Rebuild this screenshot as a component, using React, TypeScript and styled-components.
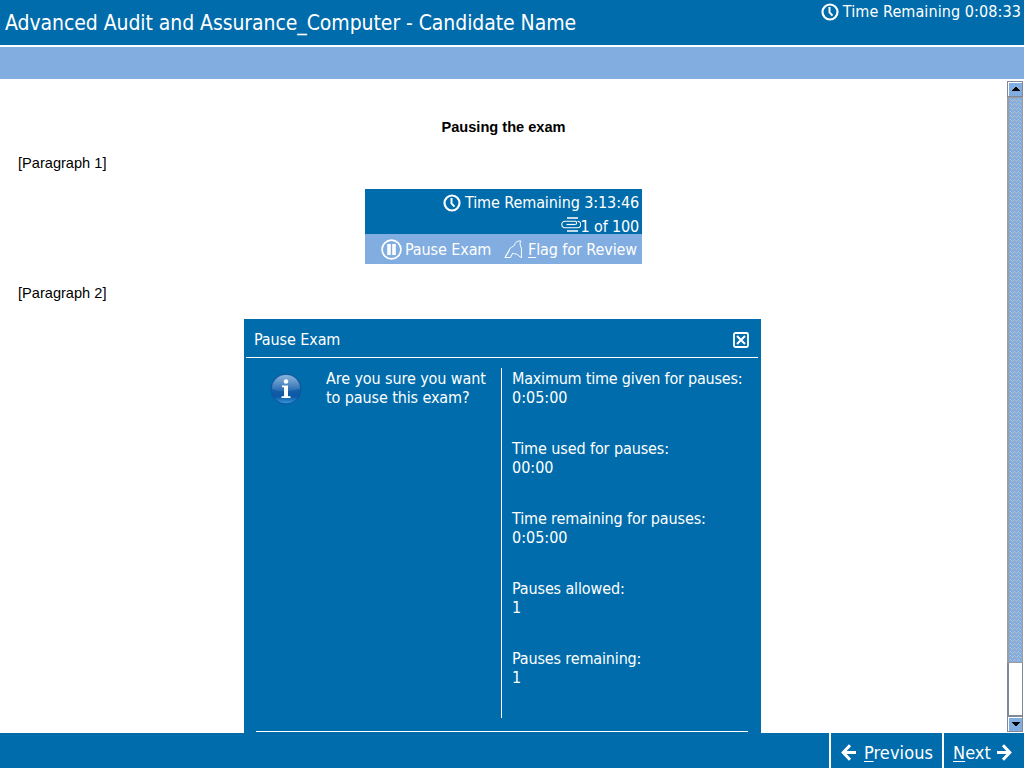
import React from "react";
import styled, { createGlobalStyle } from "styled-components";

const BLUE = "#006cab";
const LIGHT = "#81ade0";

const Global = createGlobalStyle`
  html, body { margin: 0; padding: 0; background: #fff; }
  * { box-sizing: border-box; }
`;

const Screen = styled.div`
  width: 1024px;
  height: 768px;
  display: flex;
  flex-direction: column;
  overflow: hidden;
  background: #fff;
`;

const Label = styled.span<{ $size?: number; $track?: number; $line?: number }>`
  display: block;
  margin: 0;
  font-family: "DejaVu Sans Condensed", "DejaVu Sans", sans-serif;
  font-stretch: condensed;
  font-size: ${(p) => p.$size ?? 16}px;
  letter-spacing: ${(p) => p.$track ?? -0.1}px;
  line-height: ${(p) => p.$line ?? 19}px;
  color: #fff;
  white-space: pre;
`;

const Key = styled.span`
  text-decoration: underline;
  text-decoration-thickness: 1px;
  text-underline-offset: 2px;
`;

const Header = styled.header`
  height: 45px;
  flex: none;
  display: flex;
  justify-content: space-between;
  align-items: flex-start;
  background: ${BLUE};
`;

const TitleBox = styled.div`
  padding: 11px 0 0 5px;
`;

const Timer = styled.div<{ $gap?: number }>`
  display: flex;
  align-items: center;
  gap: ${(p) => p.$gap ?? 4}px;
`;

const HeaderTimer = styled(Timer)`
  padding: 2px 3px 0 0;
`;

const Counter = styled.div`
  display: flex;
  align-items: flex-start;
`;

const Band = styled.div`
  height: 32px;
  margin-top: 2px;
  flex: none;
  background: ${LIGHT};
`;

const Main = styled.main`
  height: 654px;
  flex: none;
  display: flex;
`;

const Content = styled.section`
  flex: 1;
  padding: 39px 0 0 0;
  overflow: hidden;
`;

const Body = styled.p<{ $top: number }>`
  margin: ${(p) => p.$top}px 0 0 18px;
  font: 14.6px/18px "Liberation Sans", Arial, sans-serif;
  color: #000;
`;

const Heading = styled.h1`
  margin: 0;
  text-align: center;
  font: bold 14.6px/18px "Liberation Sans", Arial, sans-serif;
  color: #000;
`;

const Widget = styled.div`
  width: 277px;
  height: 75px;
  margin: 17px 0 0 365px;
  background: ${BLUE};
`;

const WidgetTop = styled.div`
  height: 45px;
  padding: 4px 3px 0 0;
  display: flex;
  flex-direction: column;
  align-items: flex-end;
  gap: 5px;
`;

const WidgetBar = styled.div`
  height: 30px;
  padding-left: 16px;
  display: flex;
  align-items: center;
  background: ${LIGHT};
`;

const BarItem = styled.div<{ $width: number; $gap: number }>`
  width: ${(p) => p.$width}px;
  display: flex;
  align-items: center;
  gap: ${(p) => p.$gap}px;
`;

const Dialog = styled.div`
  width: 517px;
  height: 414px;
  margin: 17px 0 0 244px;
  padding: 0 3px 0 2px;
  background: ${BLUE};
`;

const DialogHead = styled.div`
  height: 39px;
  padding: 3px 9px 0 8px;
  display: flex;
  align-items: center;
  justify-content: space-between;
  border-bottom: 1px solid #fff;
`;

const DialogBody = styled.div`
  height: 374px;
  margin: 0 10px;
  padding-top: 10px;
  border-bottom: 1px solid #fff;
`;

const Columns = styled.div`
  height: 350px;
  display: flex;
`;

const Question = styled.div`
  width: 246px;
  flex: none;
  display: flex;
  padding: 1px 0 0 14px;
  gap: 24px;
  border-right: 1px solid #fff;
`;

const InfoBox = styled.div`
  padding-top: 4px;
`;

const Facts = styled.dl`
  margin: 0;
  padding: 1px 0 0 10px;
  display: flex;
  flex-direction: column;
  gap: 32px;
`;

const Track = styled.div`
  width: 17px;
  padding: 2px 1px 1px 0;
  display: flex;
  flex-direction: column;
`;

const ScrollButton = styled.div`
  height: 16px;
  display: flex;
  align-items: center;
  justify-content: center;
  padding-left: 1px;
  border: 1px solid #7f8a96;
  box-shadow: inset 1px 1px 0 #fff;
  background: ${LIGHT};
`;

const Thumb = styled.div`
  height: 566px;
  border: 1px solid #9a9da1;
  border-left-width: 2px;
  background: ${LIGHT};
`;

const Trough = styled.div`
  height: 53px;
  border: 1px solid #7f8a96;
  border-width: 0 1px 1px 2px;
  background: #fff;
`;

const Footer = styled.footer`
  height: 35px;
  flex: none;
  display: flex;
  justify-content: flex-end;
  background: ${BLUE};
`;

const NavButton = styled.div<{ $width: number; $pad: number; $gap: number }>`
  width: ${(p) => p.$width}px;
  padding: 4px 0 0 ${(p) => p.$pad}px;
  display: flex;
  align-items: center;
  gap: ${(p) => p.$gap}px;
  border-left: 2px solid #fff;
`;

const Clock = () => (
  <svg width="18" height="18" viewBox="0 0 18 18" fill="none" stroke="#fff">
    <circle cx="9" cy="9" r="7.5" strokeWidth="2.2" />
    <path d="M8.500 4v5.400l3 3.200" strokeWidth="2" />
  </svg>
);

const Clip = () => (
  <svg width="20" height="15" viewBox="0 0 20 15" fill="none" stroke="#fff">
    <path d="M6 1h11M6 14h11" strokeWidth="1.600" />
    <path d="M14.500 7.500a1.700 1.700 0 0 0 0 -3.200H4a3.200 3.200 0 0 0 0 6.400H16.500a3.200 3.200 0 0 0 0-6.400" strokeWidth="1.100" />
    <path d="M5.500 7.500h9" strokeWidth="1.200" />
  </svg>
);

const PauseIcon = () => (
  <svg width="21" height="21" viewBox="0 0 21 21" fill="none" stroke="#fff">
    <circle cx="10.5" cy="10.5" r="9.4" strokeWidth="1.700" />
    <path d="M8 5v11M13 5v11" strokeWidth="3.600" />
  </svg>
);

const Flag = () => (
  <svg width="19" height="19" viewBox="0 0 19 19" fill="none" stroke="#fff" strokeWidth="1">
    <path d="M1 17.500L5.800 9C6 7 9 7.500 10.500 5C11.500 1.500 14 .8 17 1C15.500 3 16 5 17.300 8C18 11 16.800 13 17.700 17.500C15.500 17.500 14.500 14.500 12 14C10.500 13.500 9.500 14 8.800 13L6.500 17.500H1L5.300 10.500" />
  </svg>
);

const CloseBox = () => (
  <svg width="16" height="16" viewBox="0 0 16 16" fill="none" stroke="#fff">
    <rect x="1" y="1" width="14" height="14" rx="1.500" strokeWidth="1.800" />
    <path d="M4 4l8 8M12 4l-8 8" strokeWidth="2.100" />
  </svg>
);

const Info = () => (
  <svg width="32" height="33" viewBox="0 0 32 33">
    <defs>
      <linearGradient id="ball" x1="0" y1="0" x2="0" y2="1">
        <stop offset="0" stopColor="#3f83c4" />
        <stop offset="0.5" stopColor="#1560aa" />
        <stop offset="0.75" stopColor="#0b58a6" />
        <stop offset="1" stopColor="#3b9be0" />
      </linearGradient>
      <linearGradient id="shine" x1="0" y1="0" x2="0" y2="1">
        <stop offset="0" stopColor="#fff" stopOpacity="0.400" />
        <stop offset="1" stopColor="#fff" stopOpacity="0.080" />
      </linearGradient>
    </defs>
    <circle cx="16" cy="16" r="15" fill="url(#ball)" stroke="#0f559a" strokeWidth="1" />
    <path d="M2 16a14 14 0 0 1 28 0c-8 2-20 4-28 0z" fill="url(#shine)" />
    <circle cx="16" cy="8.500" r="2.300" fill="#fff" />
    <path d="M12 12.500h6v10.700h2.500v1.800h-9v-1.800h2.500v-8.900h-2z" fill="#fff" />
  </svg>
);

const ArrowLeft = () => (
  <svg width="15" height="17" viewBox="0 0 15 17" fill="none" stroke="#fff" strokeWidth="3">
    <path d="M9 1.300L2.200 8.500L9 15.700M2.500 8.500H15" />
  </svg>
);

const ArrowRight = () => (
  <svg width="15" height="17" viewBox="0 0 15 17" fill="none" stroke="#fff" strokeWidth="3">
    <path d="M6 1.300L12.800 8.500L6 15.700M12.500 8.500H0" />
  </svg>
);

const Triangle = ({ down = false }: { down?: boolean }) => (
  <svg width="8" height="4" viewBox="0 0 8 4" shapeRendering="crispEdges">
    <path d={down ? "M0 0h8v1h-1v1h-1v1h-1v1h-2v-1h-1v-1h-1v-1h-1z" : "M0 4h8v-1h-1v-1h-1v-1h-1v-1h-2v1h-1v1h-1v1h-1z"} fill="#000" />
  </svg>
);

const ThumbTexture = styled.svg`
  display: block;
  margin: 1px 0 0 1px;
`;

const Dither = () => (
  <ThumbTexture width="11" height="562" shapeRendering="crispEdges">
    <defs>
      <pattern id="dots" width="4" height="4" patternUnits="userSpaceOnUse">
        <rect x="0" y="0" width="1" height="1" fill="#c0c0c0" />
        <rect x="1" y="1" width="1" height="1" fill="#b4bac6" />
        <rect x="2" y="2" width="1" height="1" fill="#c0c0c0" />
        <rect x="3" y="1" width="1" height="1" fill="#b4bac6" />
      </pattern>
    </defs>
    <rect width="11" height="562" fill="url(#dots)" />
  </ThumbTexture>
);

const facts: { name: string; value: string; track?: number }[] = [
  { name: "Maximum time given for pauses:", value: "0:05:00", track: -0.22 },
  { name: "Time used for pauses:", value: "00:00" },
  { name: "Time remaining for pauses:", value: "0:05:00", track: -0.13 },
  { name: "Pauses allowed:", value: "1", track: -0.13 },
  { name: "Pauses remaining:", value: "1", track: -0.15 },
];

export default function App() {
  return (
    <Screen>
      <Global />
      <Header>
        <TitleBox>
          <Label $size={21} $line={24} $track={-0.07}>Advanced Audit and Assurance_Computer - Candidate Name</Label>
        </TitleBox>
        <HeaderTimer>
          <Clock />
          <Label $track={0.09}>Time Remaining 0:08:33</Label>
        </HeaderTimer>
      </Header>
      <Band />
      <Main>
        <Content>
          <Heading>Pausing the exam</Heading>
          <Body $top={18}>[Paragraph 1]</Body>
          <Widget>
            <WidgetTop>
              <Timer>
                <Clock />
                <Label>Time Remaining 3:13:46</Label>
              </Timer>
              <Counter>
                <Clip />
                <Label $track={-0.15}>1 of 100</Label>
              </Counter>
            </WidgetTop>
            <WidgetBar>
              <BarItem $width={123} $gap={3}>
                <PauseIcon />
                <Label>Pause Exam</Label>
              </BarItem>
              <BarItem $width={135} $gap={5}>
                <Flag />
                <Label><Key>F</Key>lag for Review</Label>
              </BarItem>
            </WidgetBar>
          </Widget>
          <Body $top={20}>[Paragraph 2]</Body>
          <Dialog>
            <DialogHead>
              <Label>Pause Exam</Label>
              <CloseBox />
            </DialogHead>
            <DialogBody>
              <Columns>
                <Question>
                  <InfoBox><Info /></InfoBox>
                  <Label>{"Are you sure you want\nto pause this exam?"}</Label>
                </Question>
                <Facts>
                  {facts.map((fact) => (
                    <div key={fact.name}>
                      <Label as="dt" $track={fact.track}>{fact.name}</Label>
                      <Label as="dd" $track={0}>{fact.value}</Label>
                    </div>
                  ))}
                </Facts>
              </Columns>
            </DialogBody>
          </Dialog>
        </Content>
        <Track>
          <ScrollButton><Triangle /></ScrollButton>
          <Thumb><Dither /></Thumb>
          <Trough />
          <ScrollButton><Triangle down /></ScrollButton>
        </Track>
      </Main>
      <Footer>
        <NavButton $width={113} $pad={10} $gap={8}>
          <ArrowLeft />
          <Label $size={18} $line={22} $track={0.08}><Key>P</Key>revious</Label>
        </NavButton>
        <NavButton $width={82} $pad={9} $gap={6}>
          <Label $size={18} $line={22} $track={0.05}><Key>N</Key>ext</Label>
          <ArrowRight />
        </NavButton>
      </Footer>
    </Screen>
  );
}
